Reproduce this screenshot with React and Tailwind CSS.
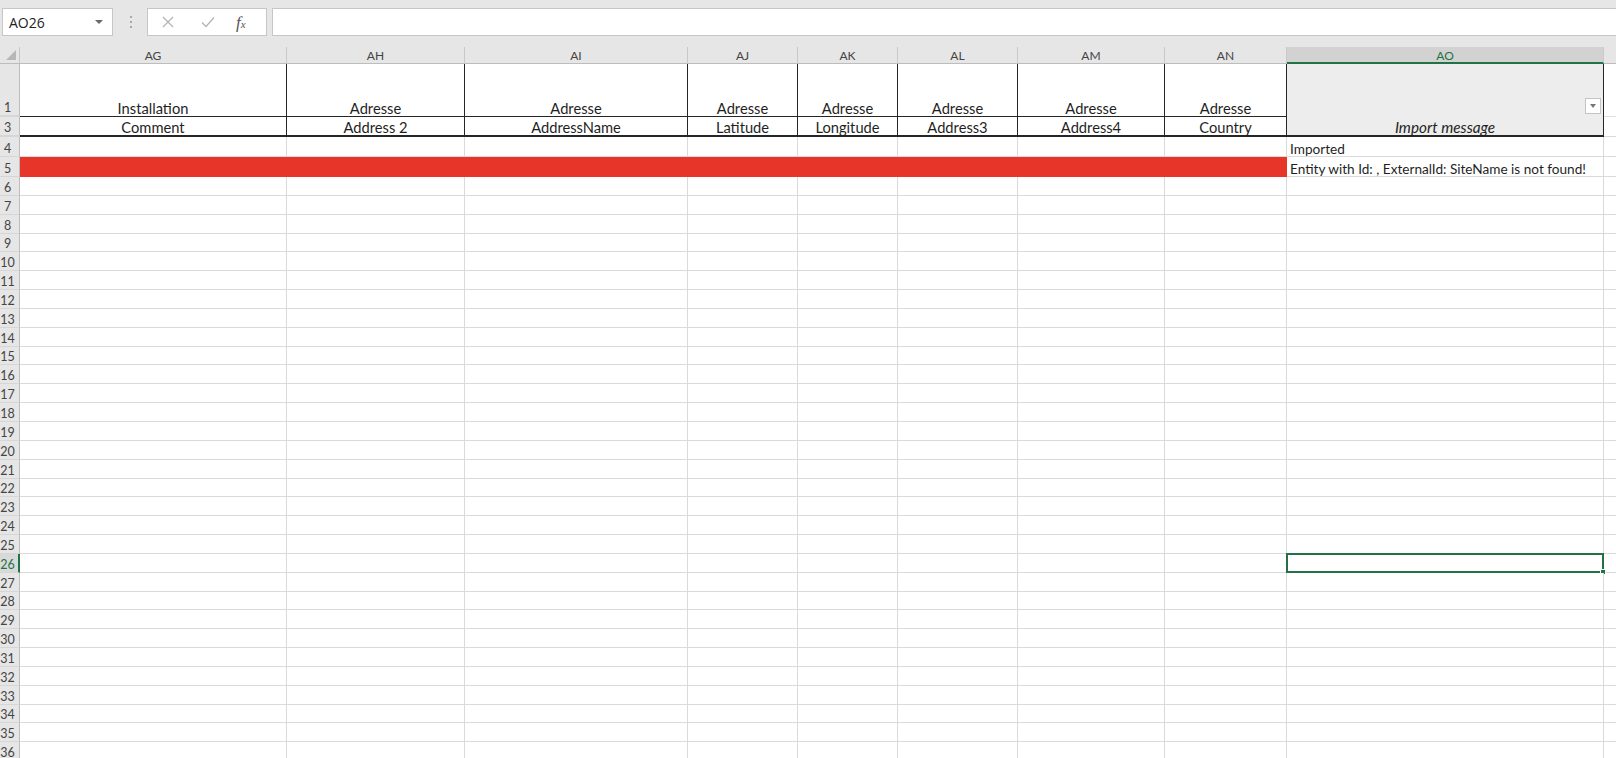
import React from "react";

const cols = [
  { k: "AG", r1: "Installation", r3: "Comment" },
  { k: "AH", r1: "Adresse", r3: "Address 2" },
  { k: "AI", r1: "Adresse", r3: "AddressName" },
  { k: "AJ", r1: "Adresse", r3: "Latitude" },
  { k: "AK", r1: "Adresse", r3: "Longitude" },
  { k: "AL", r1: "Adresse", r3: "Address3" },
  { k: "AM", r1: "Adresse", r3: "Address4" },
  { k: "AN", r1: "Adresse", r3: "Country" },
];

const rows = [];
for (let i = 6; i <= 36; i++) rows.push(i);

function RowHead({ n, active, extra = "" }) {
  return (
    <div
      className={`flex items-end border-b border-r border-b-[#d6d6d6] ${
        active ? "border-r-2 border-r-[#217346] bg-[#d9d9d9] text-[#217346]" : "border-r-[#bdbdbd] bg-[#e6e6e6] text-[#444]"
      } ${extra}`}
    >
      <span className="flex w-[15px] justify-center overflow-visible whitespace-nowrap text-[12.5px] leading-[15px]">{n}</span>
    </div>
  );
}

export default function App() {
  return (
    <div className="h-[758px] w-[1616px] overflow-hidden bg-[#e6e6e6] font-['Lato','Liberation_Sans',sans-serif] text-[#1f1f1f]">
      {/* Formula bar */}
      <div className="flex h-[47px] items-start pl-[2px] pt-[8px]">
        <div className="flex h-[28px] w-[111px] items-center justify-between border border-[#c6c6c6] bg-white pl-[6px] pr-[9px]">
          <span className="font-['Open_Sans','Liberation_Sans',sans-serif] text-[14px] text-[#222]">AO26</span>
          <span className="h-0 w-0 border-x-[4px] border-t-[4px] border-x-transparent border-t-[#6a6a6a]" />
        </div>
        <div className="flex h-[28px] w-[34px] flex-col items-center justify-center gap-[3px] pl-[1px]">
          <span className="h-[2px] w-[2px] bg-[#a8a8a8]" />
          <span className="h-[2px] w-[2px] bg-[#a8a8a8]" />
          <span className="h-[2px] w-[2px] bg-[#a8a8a8]" />
        </div>
        <div className="flex h-[28px] w-[120px] items-center border border-[#c6c6c6] bg-white pl-[14px]">
          <svg width="12" height="12" viewBox="0 0 12 12" className="mr-[27px]">
            <path d="M1 1 L11 11 M11 1 L1 11" stroke="#b4b4b4" strokeWidth="1.3" fill="none" />
          </svg>
          <svg width="14" height="12" viewBox="0 0 14 12" className="mr-[21px]">
            <path d="M1 6.5 L5 10.5 L13 1.5" stroke="#b4b4b4" strokeWidth="1.3" fill="none" />
          </svg>
          <span className="font-['Liberation_Serif',serif] text-[17px] italic leading-none text-[#555]">
            f<span className="text-[11px]">x</span>
          </span>
        </div>
        <div className="ml-[5px] h-[28px] flex-1 border border-[#c6c6c6] border-r-0 bg-white" />
      </div>

      {/* Sheet grid */}
      <div className="grid grid-cols-[20px_267px_178px_223px_110px_100px_120px_147px_122px_317px_1fr] grid-rows-[17px_53px_20px_20px_20px_repeat(31,18.85px)]">
        {/* Column header row */}
        <div className="relative border-b border-r border-b-[#bdbdbd] border-r-[#c6c6c6] bg-[#e6e6e6]">
          <span className="absolute bottom-[3px] right-[3px] h-0 w-0 border-b-[10px] border-l-[10px] border-b-[#b7b7b7] border-l-transparent" />
        </div>
        {cols.map((c) => (
          <div
            key={c.k}
            className="flex items-center justify-center border-b border-r border-b-[#bdbdbd] border-r-[#c9c9c9] bg-[#e6e6e6] pt-[2px] text-[12px] text-[#444]"
          >
            {c.k}
          </div>
        ))}
        <div className="flex items-center justify-center border-b-2 border-r border-b-[#217346] border-r-[#c9c9c9] bg-[#d2d2d2] pt-[2px] text-[12px] text-[#217346]">
          AO
        </div>
        <div className="border-b border-b-[#bdbdbd] bg-[#e6e6e6]" />

        {/* Row 1 */}
        <RowHead n="1" extra="border-b-2 border-b-[#c2c2c2]" />
        {cols.map((c) => (
          <div
            key={c.k}
            className="flex items-end justify-center border-b border-r border-b-[#262626] border-r-[#262626] bg-white text-[14.7px] leading-[15px]"
          >
            {c.r1}
          </div>
        ))}
        <div className="relative row-span-2 flex items-end justify-center border-b-2 border-r border-b-[#262626] border-r-[#262626] bg-[#ededed] text-[15.3px] italic leading-[15px]">
          Import message
          <div className="absolute right-[2px] top-[34px] flex h-[16px] w-[16px] items-center justify-center border border-[#c4c4c4] bg-white">
            <span className="h-0 w-0 border-x-[3.5px] border-t-[4px] border-x-transparent border-t-[#777]" />
          </div>
        </div>
        <div className="border-b border-b-[#e2e2e2] bg-white" />

        {/* Row 3 */}
        <RowHead n="3" extra="border-b-2 border-b-[#a8a8a8]" />
        {cols.map((c) => (
          <div
            key={c.k}
            className="flex items-end justify-center border-b-2 border-r border-b-[#262626] border-r-[#262626] bg-white text-[14.7px] leading-[15px]"
          >
            {c.r3}
          </div>
        ))}
        <div className="border-b border-b-[#d9d9d9] bg-white" />

        {/* Row 4 */}
        <RowHead n="4" />
        {cols.map((c) => (
          <div key={c.k} className="border-b border-r border-b-[#dadada] border-r-[#dadada] bg-white" />
        ))}
        <div className="flex items-end border-b border-r border-b-[#dadada] border-r-[#dadada] bg-white pl-[3px] text-[13.6px] leading-[14px]">
          Imported
        </div>
        <div className="border-b border-b-[#dadada] bg-white" />

        {/* Row 5 */}
        <RowHead n="5" />
        {cols.map((c) => (
          <div key={c.k} className="bg-[#e8352a]" />
        ))}
        <div className="flex items-end whitespace-nowrap border-b border-r border-b-[#dadada] border-r-[#dadada] bg-white pl-[3px] text-[13.6px] leading-[14px]">
          Entity with Id: , ExternalId: SiteName is not found!
        </div>
        <div className="border-b border-b-[#dadada] bg-white" />

        {/* Rows 6..36 */}
        {rows.map((r) => (
          <React.Fragment key={r}>
            <RowHead n={String(r)} active={r === 26} />
            {cols.map((c) => (
              <div key={c.k} className="border-b border-r border-b-[#dadada] border-r-[#dadada] bg-white" />
            ))}
            <div className="relative border-b border-r border-b-[#dadada] border-r-[#dadada] bg-white">
              {r === 26 && (
                <div className="absolute -left-[1px] -top-[1px] bottom-[-1px] right-[-1px] border-2 border-[#217346]">
                  <span className="absolute -bottom-[4px] -right-[4px] h-[6px] w-[6px] border border-white bg-[#217346]" />
                </div>
              )}
            </div>
            <div className="border-b border-b-[#dadada] bg-white" />
          </React.Fragment>
        ))}
      </div>
    </div>
  );
}
